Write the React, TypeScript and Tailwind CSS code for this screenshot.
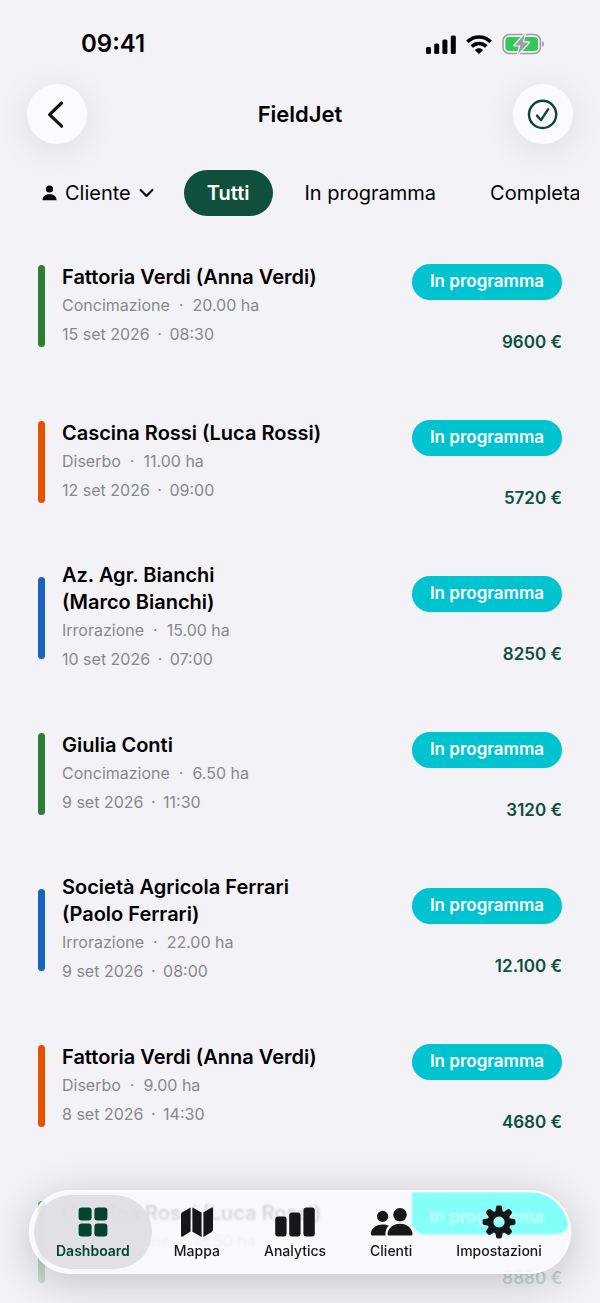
import type { ReactNode } from 'react'
import clsx from 'clsx'

type Kind = 'Concimazione' | 'Diserbo' | 'Irrorazione'

interface Job {
  id: number
  client: string
  contact?: string
  stacked?: boolean
  kind: Kind
  area: string
  when?: [date: string, time: string]
  price: string
}

const JOBS: Job[] = [
  { id: 1, client: 'Fattoria Verdi', contact: '(Anna Verdi)', kind: 'Concimazione', area: '20.00 ha', when: ['15 set 2026', '08:30'], price: '9600 €' },
  { id: 2, client: 'Cascina Rossi', contact: '(Luca Rossi)', kind: 'Diserbo', area: '11.00 ha', when: ['12 set 2026', '09:00'], price: '5720 €' },
  { id: 3, client: 'Az. Agr. Bianchi', contact: '(Marco Bianchi)', stacked: true, kind: 'Irrorazione', area: '15.00 ha', when: ['10 set 2026', '07:00'], price: '8250 €' },
  { id: 4, client: 'Giulia Conti', kind: 'Concimazione', area: '6.50 ha', when: ['9 set 2026', '11:30'], price: '3120 €' },
  { id: 5, client: 'Società Agricola Ferrari', contact: '(Paolo Ferrari)', stacked: true, kind: 'Irrorazione', area: '22.00 ha', when: ['9 set 2026', '08:00'], price: '12.100 €' },
  { id: 6, client: 'Fattoria Verdi', contact: '(Anna Verdi)', kind: 'Diserbo', area: '9.00 ha', when: ['8 set 2026', '14:30'], price: '4680 €' },
  { id: 7, client: 'Cascina Rossi', contact: '(Luca Rossi)', kind: 'Concimazione', area: '18.50 ha', price: '8880 €' },
]

const KIND_COLOR: Record<Kind, string> = {
  Concimazione: 'bg-[#2e7d32]',
  Diserbo: 'bg-[#e65100]',
  Irrorazione: 'bg-[#1a62bd]',
}

function StatusBar() {
  return (
    <div className="flex items-center justify-between pt-8 pr-[55px] pl-[81px]">
      <span className="text-2xl leading-6 font-semibold">09:41</span>
      <div className="flex h-6 items-center gap-[10px]">
        <svg width="30" height="19" viewBox="0 0 30 19" aria-hidden>
          <rect x="0" y="12" width="5" height="7" rx="1.5" />
          <rect x="8.2" y="8.6" width="5" height="10.4" rx="1.5" />
          <rect x="16.4" y="4.6" width="5" height="14.4" rx="1.5" />
          <rect x="24.8" y="0.4" width="5" height="18.6" rx="1.5" />
        </svg>
        <svg width="26" height="19" viewBox="0 0 26 19" aria-hidden>
          <g fill="none" stroke="#000" strokeWidth="3.6">
            <path d="M1.4 6.9 C8 .4 18 .4 24.6 6.9" />
            <path d="M5.7 11.5 C9.9 7.5 16.1 7.5 20.3 11.5" />
          </g>
          <path d="M13 19 L8.8 14.9 C11.2 12.8 14.8 12.8 17.2 14.9 Z" />
        </svg>
        <svg width="43" height="22" viewBox="0 0 43 22" aria-hidden>
          <rect x="1" y="1.6" width="37.4" height="18.8" rx="6" fill="none" stroke="#9c9ca1" strokeWidth="1.5" />
          <rect x="3.4" y="4" width="32.6" height="14" rx="3.8" fill="#34c759" />
          <path d="M40.2 8 C42.6 9 42.6 13 40.2 14 Z" fill="#9c9ca1" />
          <path d="M22.8 1 L12.6 12.4 H18.4 L16 21 L26.8 9.4 H20.8 Z" fill="#9c9ca1" stroke="#f2f2f7" strokeWidth="2.4" strokeLinejoin="round" paintOrder="stroke" />
        </svg>
      </div>
    </div>
  )
}

function RoundButton({ label, children }: { label: string; children: ReactNode }) {
  return (
    <button
      aria-label={label}
      className="flex size-[60px] items-center justify-center rounded-full bg-[#fbfbff] shadow-[0_6px_36px_rgba(0,0,0,0.09)]"
    >
      {children}
    </button>
  )
}

function Header() {
  return (
    <header className="mt-7 flex items-center justify-between px-[27px]">
      <RoundButton label="Indietro">
        <svg width="26" height="30" viewBox="0 0 26 30" fill="none" stroke="#151517" strokeWidth="3.2" strokeLinecap="round" strokeLinejoin="round" aria-hidden>
          <path d="M17.6 4 L5.6 15.6 L17.6 27.2" />
        </svg>
      </RoundButton>
      <h1 className="text-[22px] leading-7 font-semibold">FieldJet</h1>
      <RoundButton label="Seleziona">
        <svg width="32" height="32" viewBox="0 0 32 32" fill="none" stroke="#0c4536" strokeWidth="2.4" strokeLinecap="round" strokeLinejoin="round" aria-hidden>
          <circle cx="15.6" cy="16.4" r="13.6" />
          <path d="M10 17.6 L14 22.2 L21.2 11.2" />
        </svg>
      </RoundButton>
    </header>
  )
}

function Filters() {
  return (
    <div className="mt-[26px] mr-[21px] flex items-center overflow-hidden pl-[42px] text-xl whitespace-nowrap">
      <button className="flex shrink-0 items-center gap-2">
        <svg width="15" height="16" viewBox="0 0 15 16" aria-hidden>
          <circle cx="7.5" cy="4" r="3.6" />
          <path d="M.6 15.2 C.2 11 4 9.2 7.5 9.2 C11 9.2 14.8 11 14.4 15.2 Z" />
        </svg>
        Cliente
        <svg width="15" height="10" viewBox="0 0 15 10" fill="none" stroke="#000" strokeWidth="2.2" strokeLinecap="round" strokeLinejoin="round" aria-hidden>
          <path d="M1.6 2 L7.5 8 L13.4 2" />
        </svg>
      </button>
      <button className="ml-[30px] h-[46px] shrink-0 rounded-full bg-[#0f4f3b] px-[23px] font-semibold text-white">Tutti</button>
      <button className="ml-8 shrink-0">In programma</button>
      <button className="ml-[54px] shrink-0">Completati</button>
    </div>
  )
}

function JobRow({ job }: { job: Job }) {
  return (
    <li className="flex min-h-39 items-center">
      <span className={clsx('h-[82px] w-[7px] shrink-0 rounded-full', KIND_COLOR[job.kind])} />
      <div className="ml-[17px] min-w-0 flex-1 text-base text-[#88888d]">
        <h2 className="text-xl leading-[27px] font-semibold text-black">
          {job.client} {job.stacked && <br />}
          {job.contact}
        </h2>
        <p className="leading-7">
          {job.kind}<span className="mx-[9px]">·</span>{job.area}
        </p>
        <p className="min-h-[30px] leading-[30px]">
          {job.when && <>{job.when[0]} <span className="mx-[3px]">·</span> {job.when[1]}</>}
        </p>
      </div>
      <div className="flex flex-col items-end gap-8 pt-1">
        <span className="flex h-9 items-center rounded-full bg-[#00c3d0] px-[18px] text-[17px] font-semibold text-white">In programma</span>
        <span className="text-[17px] leading-5 font-semibold text-[#0f4f3b]">{job.price}</span>
      </div>
    </li>
  )
}

const TABS = [
  {
    label: 'Dashboard',
    icon: (
      <>
        <rect x="2.6" y="1.6" width="13" height="13" rx="3" />
        <rect x="18.4" y="1.6" width="13" height="13" rx="3" />
        <rect x="2.6" y="17.4" width="13" height="13" rx="3" />
        <rect x="18.4" y="17.4" width="13" height="13" rx="3" />
      </>
    ),
  },
  {
    label: 'Mappa',
    icon: (
      <>
        <path d="M10.6 1.6 V25.4 L2.8 30.4 Q1 31.2 1 29.2 V8.6 Q1 7 2.4 6.2 Z" />
        <path d="M12.4 1.6 L21.6 6.6 V31 L12.4 25.8 Z" />
        <path d="M23.4 6.6 L31.2 1.8 Q33 .9 33 2.9 V23.6 Q33 25.2 31.6 26 L23.4 31 Z" />
      </>
    ),
  },
  {
    label: 'Analytics',
    icon: (
      <>
        <rect x="-2.8" y="10.6" width="11.4" height="20" rx="3" />
        <rect x="11.2" y="6.4" width="11.4" height="24.2" rx="3" />
        <rect x="25.4" y="1.6" width="11.4" height="29" rx="3" />
      </>
    ),
  },
  {
    label: 'Clienti',
    icon: (
      <>
        <circle cx="8.6" cy="10.4" r="5.6" />
        <path d="M-1.6 29.6 Q-3.4 29.6 -3.2 27.2 C-2.4 21.4 3 18.4 8.6 18.4 C11 18.4 13 18.8 14.8 19.8 C12.2 22 11.2 25.4 11.4 29.6 Z" />
        <circle cx="26" cy="8.8" r="6.8" />
        <path d="M15.2 29.6 Q13.2 29.6 13.6 27 C14.8 21 20.4 17.8 26 17.8 C31.8 17.8 37.2 21 38.4 27 Q38.8 29.6 36.8 29.6 Z" />
      </>
    ),
  },
  {
    label: 'Impostazioni',
    icon: (
      <>
        <path fillRule="evenodd" d="M17 4.6 A11.6 11.6 0 1 1 16.99 4.6 Z M17 10.4 A5.6 5.6 0 1 0 17.01 10.4 Z" />
        {[0, 45, 90, 135, 180, 225, 270, 315].map((deg) => (
          <path key={deg} transform={`rotate(${deg} 17 16)`} d="M13.2 6.4 L14.1 1 Q14.4 -.4 15.8 -.4 H18.2 Q19.6 -.4 19.9 1 L20.8 6.4 Z" />
        ))}
      </>
    ),
  },
]

function TabBar() {
  return (
    <nav className="absolute inset-x-[29px] bottom-[29px] rounded-full bg-[#fbfbff]/75 p-[5px] shadow-[0_8px_44px_rgba(0,0,0,0.2)] backdrop-blur-[1px]">
      {/* status badge glowing through the glass */}
      <div className="pointer-events-none absolute inset-0 overflow-hidden rounded-full border-2 border-[#fbfbff]" aria-hidden>
        <div className="ml-auto flex h-[42px] w-[157px] items-end rounded-b-xl bg-[#84fff8] pb-1 pl-[18px] text-[17px] font-semibold text-[#c4fffc] blur-[1px]">
          In programma
        </div>
      </div>
      <ul className="relative flex">
        {TABS.map((tab, i) => (
          <li key={tab.label}>
            <a
              href="#"
              aria-current={i === 0 ? 'page' : undefined}
              className={clsx(
                'flex flex-col items-center rounded-full px-[22px] pt-[11px] pb-2 text-sm leading-5',
                i === 0 ? 'bg-[#dddde2]/90 font-semibold text-[#04442f]' : 'font-medium text-[#17171b]',
              )}
            >
              <svg width="34" height="32" viewBox="0 0 34 32" className="mb-[3px] overflow-visible" fill="currentColor" aria-hidden>
                {tab.icon}
              </svg>
              {tab.label}
            </a>
          </li>
        ))}
      </ul>
    </nav>
  )
}

export default function App() {
  return (
    <div className="relative h-screen overflow-hidden bg-[#f2f2f7] font-['Inter',sans-serif] text-black">
      <StatusBar />
      <Header />
      <Filters />
      <ul className="mt-3 px-[38px]">
        {JOBS.map((job) => (
          <JobRow key={job.id} job={job} />
        ))}
      </ul>
      <div className="pointer-events-none absolute inset-x-0 bottom-0 h-36 bg-linear-to-t from-[#f2f2f7]/90 via-[#f2f2f7]/60 to-[#f2f2f7]/0" />
      <TabBar />
    </div>
  )
}
